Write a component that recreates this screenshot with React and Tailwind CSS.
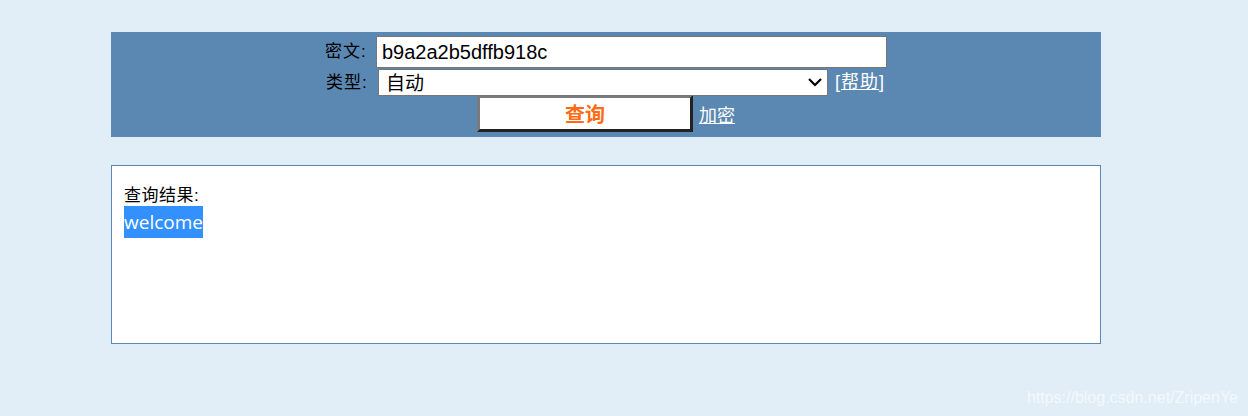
import React from 'react';

const cjk = "font-['Liberation_Sans','Noto_Sans_CJK_SC',sans-serif]";

const App = () => {
  return (
    <div className={`relative min-h-[416px] w-[1248px] bg-[#e1eef7] pt-[32px] ${cjk}`}>
      {/* Query panel */}
      <div className="mx-[111px] w-[990px] h-[105px] bg-[#5b88b2] pt-[4px] flex flex-col items-center text-black">
        <div className="flex items-center h-[32px]">
          <span className="text-[17px] w-[51px] tracking-[1px]">密文:</span>
          <input
            readOnly
            value="b9a2a2b5dffb918c"
            className="w-[511px] h-[32px] bg-white border border-[#767676] px-[5px] text-[20px] text-black outline-none"
          />
        </div>
        <div className="flex items-center h-[27px] mt-[1px]">
          <span className="text-[17px] w-[52px] tracking-[1px]">类型:</span>
          <div className="relative w-[450px] h-[27px]">
            <select className="appearance-none w-full h-full bg-white border border-[#767676] pl-[7px] text-[19px] text-black outline-none">
              <option>自动</option>
            </select>
            <svg className="absolute right-[5px] top-[7px] w-[16px] h-[12px] pointer-events-none" viewBox="0 0 16 12">
              <path d="M2 3 L8 9 L14 3" fill="none" stroke="#000" strokeWidth="2.2" />
            </svg>
          </div>
          <span className="ml-[7px] w-[51px] text-[18px] text-white tracking-[1px]">
            [<a className="underline">帮助</a>]
          </span>
        </div>
        <div className="flex items-center h-[37px] mt-[-1px]">
          <button className="w-[216px] h-[37px] bg-white border-[3px] border-t-[#7a7a7a] border-l-[#7a7a7a] border-b-[#222] border-r-[#222] text-[20px] font-bold text-[#ff6a13] leading-none pt-[2px]">
            查询
          </button>
          <a className="ml-[6px] mt-[5px] text-[18px] text-white underline">加密</a>
        </div>
      </div>

      {/* Result box */}
      <div className="mx-[111px] mt-[28px] w-[990px] h-[179px] bg-white border border-[#5b88b2] px-[12px] pt-[17px]">
        <div className="text-[17px] leading-[26px] text-black tracking-[0.5px]">查询结果:</div>
        <div className="leading-[27px]">
          <span className="bg-[#3390ff] text-white text-[19px] font-['Open_Sans',sans-serif] py-[3px]">welcome</span>
        </div>
      </div>

      <div className="absolute right-[10px] bottom-[6px] text-[16px] text-white/60 font-['Liberation_Sans',sans-serif]">
        https://blog.csdn.net/ZripenYe
      </div>
    </div>
  );
};

export default App;
